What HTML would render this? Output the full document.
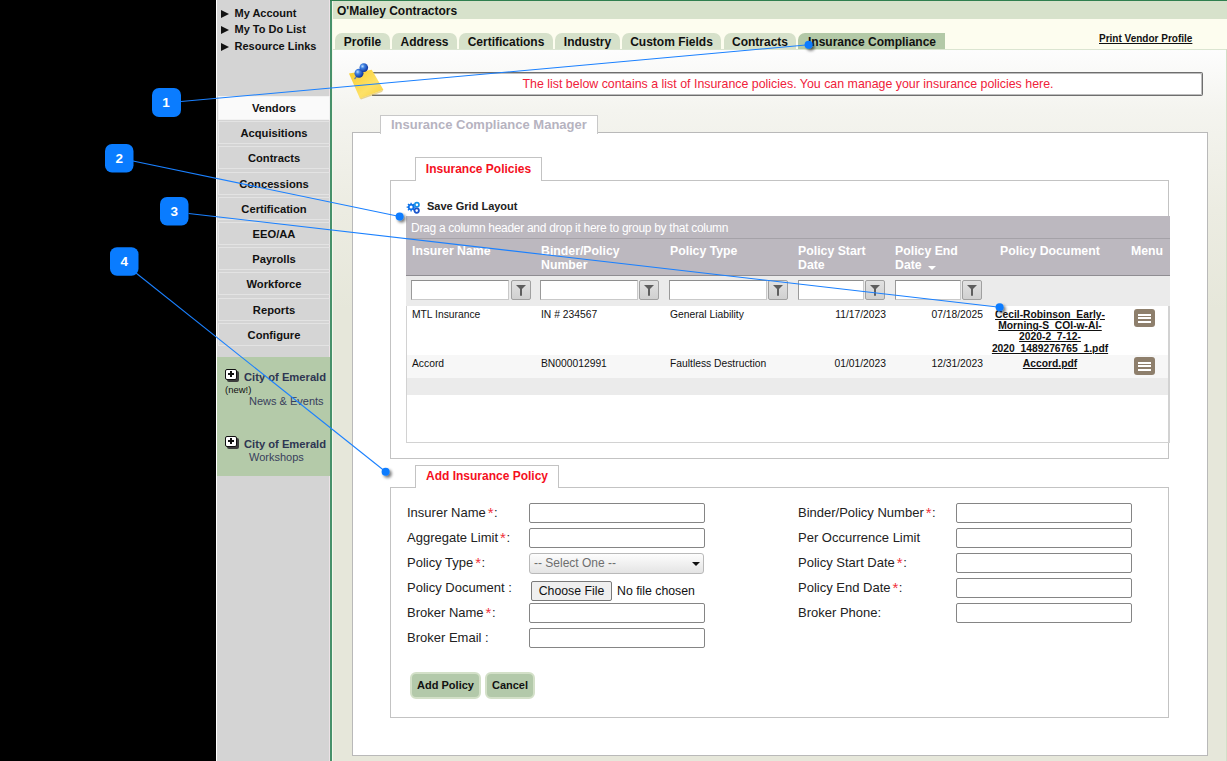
<!DOCTYPE html>
<html><head><meta charset="utf-8">
<style>
*{box-sizing:border-box;margin:0;padding:0}
html,body{width:1227px;height:761px;overflow:hidden;background:#000;font-family:"Liberation Sans",sans-serif;position:relative}
.a{position:absolute}
.side{left:217px;top:0;width:112px;height:761px;background:#d4d4d4}
.wl{left:216px;top:0;width:1px;height:761px;background:#fff}
.pl{left:329px;top:0;width:1px;height:761px;background:#ece2e6}
.gl{left:330px;top:0;width:2px;height:761px;background:#47916a}
.gt{left:330px;top:0;width:897px;height:1px;background:#2f7f4f}
.cl{left:332px;top:1px;width:1px;height:760px;background:#f4f7ea}
.links{left:221px;top:4.5px;font-size:11px;font-weight:bold;color:#111}
.links div{height:16.7px;line-height:17px;white-space:nowrap;position:relative;padding-left:13.5px}
.links span{position:absolute;left:0;top:5px;width:0;height:0;border-left:8px solid #111;border-top:4px solid transparent;border-bottom:4px solid transparent}
.nav{left:218px;width:112px;height:23px;background:#d5d5d5;border:1px solid #e3e3e3;font-size:11.2px;font-weight:bold;color:#111;text-align:center;line-height:21px;padding-top:1px}
.nav.on{background:#fafafa;border-color:#f2f2f2;height:24px}
.hdr{left:333px;top:1px;width:894px;height:18px;background:#d7e2cb;font-size:12px;font-weight:bold;color:#111;padding-left:4px;line-height:21px}
.cream{left:333px;top:19px;width:894px;height:30px;background:#fdfdef}
.tab{top:33px;height:16px;background:#d6e1ca;border-radius:7px 7px 0 0;font-size:12px;font-weight:bold;color:#111;text-align:center;line-height:19px;white-space:nowrap}
.tab.on{background:#b3c9a7;border-radius:7px 0 0 0}
.tline{left:333px;top:49px;width:894px;height:1px;background:#dbe5d1}
.content{left:333px;top:50px;width:894px;height:711px;background:linear-gradient(#fdfdfd 0px,#f4f4ef 60px,#ecece2 160px,#e6e7da 260px,#e6e7da 711px)}
.pvp{left:1099px;top:33px;font-size:10px;font-weight:bold;color:#111;text-decoration:underline;white-space:nowrap}
.msg{left:372px;top:72px;width:831px;height:24px;border:1px solid #6e6e6e;border-left:none;border-radius:0 2px 2px 0;box-shadow:inset -1px 1px 0 #bdbdbd,inset 0 -1px 0 #bdbdbd;background:#fff;font-size:12.4px;color:#f0213a;text-align:center;line-height:22px;padding-left:2px;white-space:nowrap}
.panel{left:352px;top:132px;width:856px;height:624px;background:#fff;border:1px solid #b9b9b9}
.legend1{left:380px;top:115px;width:218px;height:19px;background:#fff;border:1px solid #c8c8c8;border-bottom:none;font-size:13px;font-weight:bold;color:#b6b3bf;padding-left:10px;line-height:18px;white-space:nowrap}
.fs{border:1px solid #c3c3c3;border-width:1px 1px 1px 1px;background:#fff}
.ftab{background:#fff;border:1px solid #c3c3c3;border-bottom:none;font-size:12px;font-weight:bold;color:#f5101e;text-align:center;line-height:21px;white-space:nowrap}
.sgl{left:427px;top:200px;font-size:11px;font-weight:bold;color:#222;white-space:nowrap}
.grid{left:406px;top:216px;width:764px;height:227px;background:#fff;border:1px solid #d2d2d2;border-top:none;border-right-width:2px}
.gp{left:406px;top:216px;width:764px;height:22px;background:#bcb8bf;color:#fff;font-size:12px;letter-spacing:-0.29px;padding-left:5px;line-height:25px;white-space:nowrap}
.gsep{left:406px;top:238px;width:764px;height:1px;background:#a5a2a8}
.gh{left:406px;top:239px;width:764px;height:36px;background:#bcb8bf}
.ghb{left:406px;top:275px;width:764px;height:1px;background:#8f8d92}
.gtx{font-size:12.3px;font-weight:bold;color:#fff;line-height:13.5px;white-space:nowrap}
.gf{left:406px;top:276px;width:764px;height:30px;background:#ebebeb}
.fi{top:280px;height:20px;background:#fff;border:1px solid #c9c9c9;border-top-color:#8e8e8e;border-left-color:#9a9a9a}
.fb{top:280px;width:20px;height:20px;border:1px solid #a0a0a0;border-radius:2px;background:linear-gradient(#e2e2e2,#d0d0d0)}
.fb::before{content:"";position:absolute;left:4px;top:4px;width:0;height:0;border-left:5px solid transparent;border-right:5px solid transparent;border-top:5px solid #5e5e5e}
.fb::after{content:"";position:absolute;left:8px;top:8px;width:2px;height:6.5px;background:#5e5e5e;border-radius:0 0 1px 1px}
.r2{left:407px;top:355px;width:761px;height:23px;background:#f7f7f7}
.r3{left:407px;top:378px;width:761px;height:17px;background:#ebebeb}
.gd{font-size:10.3px;color:#111;line-height:11.2px;white-space:nowrap}
.doc{font-weight:bold;text-align:center;text-decoration:underline}
.mb{left:1134px;width:21px;height:18px;background:#8e7f6c;border-radius:3px}
.mb i{position:absolute;left:4px;width:13px;height:2px;background:#fff}
.lb{font-size:13px;color:#222;white-space:nowrap;line-height:17px}
.lb b{font-weight:normal;color:#f0303a;font-size:15px;line-height:0;position:relative;top:1.2px;margin-left:2px;margin-right:0.5px}
.ip{width:176px;height:20px;border:1px solid #858585;border-radius:2px;background:#fff}
.sel{width:175px;height:21px;border:1px solid #b9b9b9;border-radius:3px;background:linear-gradient(#fdfdfd,#e4e4e4);font-size:12px;color:#6e6e6e;padding-left:4px;line-height:19px;white-space:nowrap}
.sel::after{content:"";position:absolute;left:162px;top:8px;border-left:4px solid transparent;border-right:4px solid transparent;border-top:4.5px solid #111}
.fbtn{width:81px;height:20px;border:1px solid #7a7a7a;border-radius:2px;background:#efefef;font-size:12.3px;color:#111;text-align:center;line-height:18px;white-space:nowrap}
.gbtn{height:27px;border:2px solid #d3e0c8;border-radius:6px;background:#b3c9aa;font-size:11px;font-weight:bold;color:#111;text-align:center;line-height:23px;white-space:nowrap}
.sg{left:217px;top:357px;width:113px;height:119px;background:#b4caa9}
.pbx{width:14px;height:13px}
.pbx::before{content:"";position:absolute;left:2px;top:2px;width:12px;height:11px;background:#3c3c3c;border-radius:2px}
.pbx::after{content:"";position:absolute;left:0;top:0;width:12px;height:11px;box-sizing:border-box;border:1.5px solid #111;border-radius:2px;background:linear-gradient(#111,#111) center 3.2px/6px 2px no-repeat,linear-gradient(#111,#111) 4px 0.8px/2px 6px no-repeat,#fff}
.coe{font-size:11.2px;font-weight:bold;color:#2e3652;white-space:nowrap}
.coe2{font-size:11px;color:#38405c;white-space:nowrap}
</style></head><body>
<div class="a wl"></div>
<div class="a side"></div>
<div class="a pl"></div>
<div class="a gl"></div>
<div class="a gt"></div>
<div class="a cl"></div>
<div class="a links">
<div><span></span>My Account</div>
<div><span></span>My To Do List</div>
<div><span></span>Resource Links</div>
</div>
<div class="a nav on" style="top:96px">Vendors</div>
<div class="a nav" style="top:121px">Acquisitions</div>
<div class="a nav" style="top:146px">Contracts</div>
<div class="a nav" style="top:172px">Concessions</div>
<div class="a nav" style="top:197px">Certification</div>
<div class="a nav" style="top:222px">EEO/AA</div>
<div class="a nav" style="top:247px">Payrolls</div>
<div class="a nav" style="top:272px">Workforce</div>
<div class="a nav" style="top:298px">Reports</div>
<div class="a nav" style="top:323px">Configure</div>

<div class="a hdr">O'Malley Contractors</div>
<div class="a cream"></div>
<div class="a content"></div>
<div class="a tab" style="left:335px;width:55px">Profile</div>
<div class="a tab" style="left:392px;width:65px">Address</div>
<div class="a tab" style="left:459px;width:94px">Certifications</div>
<div class="a tab" style="left:555px;width:65px">Industry</div>
<div class="a tab" style="left:622px;width:99px">Custom Fields</div>
<div class="a tab" style="left:724px;width:72px">Contracts</div>
<div class="a tab on" style="left:798px;width:147px;padding-left:1px">Insurance Compliance</div>
<div class="a pvp">Print Vendor Profile</div>
<div class="a tline"></div>
<div class="a" style="left:1226px;top:49px;width:1px;height:712px;background:#d3dfc8"></div>
<!--NOTE-->
<div class="a msg">The list below contains a list of Insurance policies. You can manage your insurance policies here.</div>
<svg class="a" style="left:345px;top:62px" width="45" height="40" viewBox="0 0 45 40">
<defs><linearGradient id="ng" x1="0" y1="0" x2="1" y2="1"><stop offset="0" stop-color="#f9cc2a"/><stop offset="0.6" stop-color="#fde168"/><stop offset="1" stop-color="#f8d03a"/></linearGradient>
<radialGradient id="pg" cx="0.35" cy="0.35" r="0.7"><stop offset="0" stop-color="#bfe0ff"/><stop offset="0.35" stop-color="#3d7fe0"/><stop offset="1" stop-color="#0b2f9a"/></radialGradient></defs>
<polygon points="4,11.6 26.8,7.8 38.4,27.8 14.9,36.4" fill="url(#ng)"/>
<polygon points="14.9,36.4 38.4,27.8 37,30 16,37.5" fill="#d9b02a" opacity="0.5"/>
<line x1="12" y1="14" x2="9.5" y2="17" stroke="#6a7fa8" stroke-width="1.2"/>
<circle cx="14" cy="11.2" r="4.5" fill="url(#pg)"/>
<circle cx="18.8" cy="5.6" r="4.3" fill="url(#pg)"/>
</svg>

<div class="a panel"></div>
<div class="a legend1">Insurance Compliance Manager</div>
<div class="a fs" style="left:390px;top:180px;width:779px;height:279px"></div>
<div class="a ftab" style="left:415px;top:157px;width:127px;height:24px;line-height:22px">Insurance Policies</div>
<div class="a fs" style="left:390px;top:487px;width:779px;height:231px"></div>
<div class="a ftab" style="left:415px;top:465px;width:144px;height:23px">Add Insurance Policy</div>



<!--FORM-->
<div class="a lb" style="left:407px;top:504px">Insurer Name<b>*</b>:</div>
<div class="a lb" style="left:407px;top:529px">Aggregate Limit<b>*</b>:</div>
<div class="a lb" style="left:407px;top:554px">Policy Type<b>*</b>:</div>
<div class="a lb" style="left:407px;top:579px">Policy Document :</div>
<div class="a lb" style="left:407px;top:604px">Broker Name<b>*</b>:</div>
<div class="a lb" style="left:407px;top:629px">Broker Email :</div>
<div class="a ip" style="left:529px;top:503px"></div>
<div class="a ip" style="left:529px;top:528px"></div>
<div class="a sel" style="left:529px;top:553px">-- Select One --</div>
<div class="a fbtn" style="left:531px;top:581px">Choose File</div>
<div class="a lb" style="left:617px;top:583px;font-size:12.3px;color:#111">No file chosen</div>
<div class="a ip" style="left:529px;top:603px"></div>
<div class="a ip" style="left:529px;top:628px"></div>
<div class="a lb" style="left:798px;top:504px">Binder/Policy Number<b>*</b>:</div>
<div class="a lb" style="left:798px;top:529px">Per Occurrence Limit</div>
<div class="a lb" style="left:798px;top:554px">Policy Start Date<b>*</b>:</div>
<div class="a lb" style="left:798px;top:579px">Policy End Date<b>*</b>:</div>
<div class="a lb" style="left:798px;top:604px">Broker Phone:</div>
<div class="a ip" style="left:956px;top:503px"></div>
<div class="a ip" style="left:956px;top:528px"></div>
<div class="a ip" style="left:956px;top:553px"></div>
<div class="a ip" style="left:956px;top:578px"></div>
<div class="a ip" style="left:956px;top:603px"></div>
<div class="a gbtn" style="left:410px;top:672px;width:71px">Add Policy</div>
<div class="a gbtn" style="left:485px;top:672px;width:50px">Cancel</div>

<!--SIDEGREEN-->
<div class="a sg"></div>
<div class="a pbx" style="left:225px;top:369px"></div>
<div class="a coe" style="left:244px;top:371px">City of Emerald</div>
<div class="a" style="left:225px;top:384px;font-size:9.5px;color:#111;white-space:nowrap">(new!)</div>
<div class="a coe2" style="left:249px;top:395px">News &amp; Events</div>
<div class="a pbx" style="left:225px;top:436px"></div>
<div class="a coe" style="left:244px;top:438px">City of Emerald</div>
<div class="a coe2" style="left:249px;top:451px">Workshops</div>
<!--GRID-->
<svg class="a" style="left:403px;top:198px" width="20" height="20" viewBox="0 0 20 20">
<path transform="translate(0 2)" fill="#0a6fe8" fill-rule="evenodd" d="M11.34,6.46 L12.56,6.47 L12.56,7.73 L11.34,7.74 L10.84,8.94 L11.70,9.80 L10.80,10.70 L9.94,9.84 L8.74,10.34 L8.73,11.56 L7.47,11.56 L7.46,10.34 L6.26,9.84 L5.40,10.70 L4.50,9.80 L5.36,8.94 L4.86,7.74 L3.64,7.73 L3.64,6.47 L4.86,6.46 L5.36,5.26 L4.50,4.40 L5.40,3.50 L6.26,4.36 L7.46,3.86 L7.47,2.64 L8.73,2.64 L8.74,3.86 L9.94,4.36 L10.80,3.50 L11.70,4.40 L10.84,5.26Z M8.1,5.6 A1.5,1.5 0 1,0 8.1,8.6 A1.5,1.5 0 1,0 8.1,5.6Z"/>
<circle cx="13.9" cy="6.7" r="2.1" fill="none" stroke="#1590e8" stroke-width="1.7"/>
<circle cx="13.7" cy="12.6" r="2.2" fill="none" stroke="#1b55cb" stroke-width="1.8"/>
</svg>
<div class="a sgl">Save Grid Layout</div>
<div class="a grid"></div>
<div class="a gp">Drag a column header and drop it here to group by that column</div>
<div class="a gsep"></div>
<div class="a gh"></div>
<div class="a gtx" style="left:412px;top:245px">Insurer Name</div>
<div class="a gtx" style="left:541px;top:245px">Binder/Policy<br>Number</div>
<div class="a gtx" style="left:670px;top:245px">Policy Type</div>
<div class="a gtx" style="left:798px;top:245px">Policy Start<br>Date</div>
<div class="a gtx" style="left:895px;top:245px">Policy End<br>Date</div>
<div class="a" style="left:928px;top:266px;width:0;height:0;border-left:4px solid transparent;border-right:4px solid transparent;border-top:4px solid #fff"></div>
<div class="a gtx" style="left:1000px;top:245px">Policy Document</div>
<div class="a gtx" style="left:1131px;top:245px">Menu</div>
<div class="a ghb"></div>
<div class="a gf"></div>
<div class="a fi" style="left:411px;width:98px"></div><div class="a fb" style="left:511px"></div>
<div class="a fi" style="left:540px;width:98px"></div><div class="a fb" style="left:639px"></div>
<div class="a fi" style="left:669px;width:98px"></div><div class="a fb" style="left:768px"></div>
<div class="a fi" style="left:798px;width:66px"></div><div class="a fb" style="left:865px"></div>
<div class="a fi" style="left:895px;width:66px"></div><div class="a fb" style="left:962px"></div>
<div class="a r2"></div>
<div class="a r3"></div>
<div class="a gd" style="left:412px;top:309px">MTL Insurance</div>
<div class="a gd" style="left:541px;top:309px">IN # 234567</div>
<div class="a gd" style="left:670px;top:309px">General Liability</div>
<div class="a gd" style="left:786px;top:309px;width:100px;text-align:right">11/17/2023</div>
<div class="a gd" style="left:883px;top:309px;width:100px;text-align:right">07/18/2025</div>
<div class="a gd doc" style="left:990px;top:309px;width:120px">Cecil-Robinson_Early-<br>Morning-S_COI-w-AI-<br>2020-2_7-12-<br>2020_1489276765_1.pdf</div>
<div class="a gd" style="left:412px;top:358px">Accord</div>
<div class="a gd" style="left:541px;top:358px">BN000012991</div>
<div class="a gd" style="left:670px;top:358px">Faultless Destruction</div>
<div class="a gd" style="left:786px;top:358px;width:100px;text-align:right">01/01/2023</div>
<div class="a gd" style="left:883px;top:358px;width:100px;text-align:right">12/31/2023</div>
<div class="a gd doc" style="left:990px;top:358px;width:120px">Accord.pdf</div>
<div class="a mb" style="top:309px"><i style="top:4.5px"></i><i style="top:8px"></i><i style="top:11.7px"></i></div>
<div class="a mb" style="top:357px"><i style="top:4.5px"></i><i style="top:8px"></i><i style="top:11.7px"></i></div>

<!--CALLOUTS-->
<svg class="a" style="left:0;top:0" width="1227" height="761" viewBox="0 0 1227 761">
<defs><filter id="sh" x="-100%" y="-100%" width="300%" height="300%"><feGaussianBlur in="SourceAlpha" stdDeviation="1.6"/><feOffset dx="1.5" dy="2" result="b"/><feComponentTransfer><feFuncA type="linear" slope="0.55"/></feComponentTransfer><feMerge><feMergeNode/><feMergeNode in="SourceGraphic"/></feMerge></filter></defs>
<g stroke="#1a80ff" stroke-width="1.05" fill="none">
<line x1="181" y1="101.5" x2="808.6" y2="44.8"/>
<line x1="133" y1="161" x2="399.6" y2="216.6"/>
<line x1="188.6" y1="213.5" x2="999.6" y2="307.2"/>
<line x1="136" y1="273" x2="385.6" y2="471.75"/>
</g>
<g fill="#0a7cff">
<rect x="152" y="88" width="29" height="29" rx="7"/>
<rect x="105" y="144" width="28.5" height="28.5" rx="7"/>
<rect x="160" y="197" width="28.5" height="28.5" rx="7"/>
<rect x="110" y="247.2" width="28.5" height="28.5" rx="7"/>
</g>
<g fill="#0a7cff" filter="url(#sh)">
<circle cx="808.6" cy="44.8" r="4"/>
<circle cx="399.6" cy="216.6" r="4"/>
<circle cx="999.6" cy="307.2" r="4"/>
<circle cx="385.6" cy="471.75" r="4"/>
</g>
<g fill="#fff" style="font-family:'Liberation Sans',sans-serif;font-weight:bold;font-size:13.5px" text-anchor="middle">
<text x="166" y="107">1</text>
<text x="119.3" y="163">2</text>
<text x="174.3" y="216">3</text>
<text x="124.3" y="266.2">4</text>
</g>
</svg>
</body></html>
